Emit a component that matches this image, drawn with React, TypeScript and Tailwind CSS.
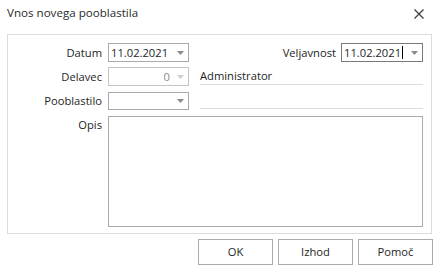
import React from "react";

const Arrow = ({ light }: { light?: boolean }) => (
  <svg width="7" height="4" viewBox="0 0 7 4" className="shrink-0">
    <path d="M0 0 H7 L3.5 4 Z" fill={light ? "#cfcfcf" : "#8a8a8a"} />
  </svg>
);

export default function App() {
  return (
    <div
      className="w-[439px] h-[271px] bg-white text-[11.2px] text-[#1e1e1e] overflow-hidden"
      style={{ fontFamily: '"Open Sans", "Noto Sans", sans-serif' }}
    >
      <div className="h-[34px] flex items-start justify-between pl-[7px] pr-[15px]">
        <div className="mt-[5px] text-[11.6px] text-[#2b2b2b] leading-[16px]">Vnos novega pooblastila</div>
        <svg width="10" height="10" viewBox="0 0 10 10" className="mt-[9px]">
          <path d="M0.5 0.5 L9.5 9.5 M9.5 0.5 L0.5 9.5" stroke="#3a3a3a" strokeWidth="1.2" />
        </svg>
      </div>
      <div className="ml-[7px] w-[425px] h-[200px] border border-[#dcdcdc] pt-[8px] pr-[8px] flex flex-col">
        {/* Row 1 */}
        <div className="flex items-center h-[19px]">
          <div className="w-[95px] text-right pr-[1px] leading-[19px]">Datum</div>
          <div className="ml-[5px] w-[81px] h-[19px] border border-[#ababab] flex items-center pl-[2px] pr-[4px]">
            <span className="flex-1 leading-[17px]">11.02.2021</span>
            <Arrow />
          </div>
          <div className="flex-1 flex justify-end items-center">
            <div className="leading-[19px] mr-[5px]">Veljavnost</div>
            <div className="w-[82px] h-[19px] border border-[#7a7a7a] flex items-center pl-[2px] pr-[4px]">
              <span className="leading-[17px]">11.02.2021</span>
              <span className="w-[1px] h-[13px] bg-black ml-[1px]" />
              <span className="flex-1" />
              <Arrow />
            </div>
          </div>
        </div>
        {/* Row 2 */}
        <div className="flex items-center h-[19px] mt-[5px]">
          <div className="w-[95px] text-right pr-[1px] leading-[19px]">Delavec</div>
          <div className="ml-[5px] w-[81px] h-[19px] border border-[#c4c4c4] flex items-center justify-end pr-[4px] gap-[7px]">
            <span className="leading-[17px] text-[#8a8a8a]">0</span>
            <Arrow light />
          </div>
          <div className="flex-1 ml-[11px] h-[17px] border-b border-[#dcdcdc] leading-[15px] text-[#1e1e1e]">
            Administrator
          </div>
        </div>
        {/* Row 3 */}
        <div className="flex items-center h-[18px] mt-[6px]">
          <div className="w-[95px] text-right pr-[1px] leading-[18px]">Pooblastilo</div>
          <div className="ml-[5px] w-[81px] h-[18px] border border-[#ababab] flex items-center justify-end pr-[4px]">
            <Arrow />
          </div>
          <div className="flex-1 ml-[11px] h-[16px] border-b border-[#dcdcdc]" />
        </div>
        {/* Row 4 */}
        <div className="flex items-start mt-[6px]">
          <div className="w-[95px] text-right pr-[1px] pt-[1px] leading-[16px]">Opis</div>
          <div className="ml-[5px] flex-1 h-[111px] border border-[#ababab]" />
        </div>
      </div>
      <div className="flex justify-end gap-[5px] pr-[6px] mt-[5px]">
        <button className="w-[75px] h-[26px] border border-[#ababab] bg-white leading-[24px] text-[#1e1e1e]">OK</button>
        <button className="w-[75px] h-[26px] border border-[#ababab] bg-white leading-[24px] text-[#1e1e1e]">Izhod</button>
        <button className="w-[75px] h-[26px] border border-[#ababab] bg-white leading-[24px] text-[#1e1e1e]">Pomoč</button>
      </div>
    </div>
  );
}
